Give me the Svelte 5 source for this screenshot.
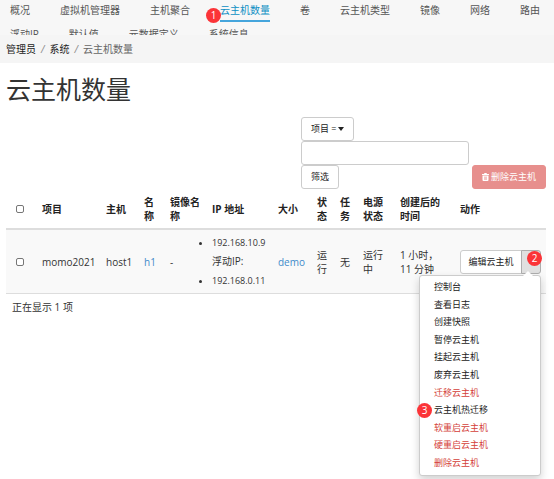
<script>
  const tabs = [
    '概况', '虚拟机管理器', '主机聚合', '云主机数量', '卷', '云主机类型', '镜像',
    '网络', '路由', '浮动IP', '默认值', '元数据定义', '系统信息'
  ];
  const active = '云主机数量';
  const columns = [
    ['项目', 64], ['主机', 38], ['名称', 26], ['镜像名称', 42], ['IP 地址', 66], ['大小', 39],
    ['状态', 23], ['任务', 23], ['电源状态', 37], ['创建后的时间', 60], ['动作', 92]
  ];
  const total = 540;
  const actions = [
    { text: '控制台' }, { text: '查看日志' }, { text: '创建快照' }, { text: '暂停云主机' },
    { text: '挂起云主机' }, { text: '废弃云主机' }, { text: '迁移云主机', danger: true },
    { text: '云主机热迁移', step: 3 }, { text: '软重启云主机', danger: true },
    { text: '硬重启云主机', danger: true }, { text: '删除云主机', danger: true }
  ];
</script>

<div class="page">
  <header>
    <nav>
      {#each tabs as tab}
        <a href="#top" class:active={tab === active}>
          {#if tab === active}<span class="badge tab-badge">1</span>{/if}{tab}
        </a>
      {/each}
    </nav>
    <div class="crumbs">
      <a href="#admin">管理员</a><i>/</i><a href="#system">系统</a><i>/</i><span>云主机数量</span>
    </div>
  </header>

  <main>
    <h1>云主机数量</h1>

    <div class="toolbar">
      <form>
        <button type="button" class="btn">项目 =<svg width="6" height="4" viewBox="0 0 6 4"><path d="M0 0h6L3 4z" fill="currentColor" /></svg></button>
        <input type="text" aria-label="筛选条件" />
        <button type="button" class="btn">筛选</button>
      </form>
      <button type="button" class="btn delete">
        <svg width="7" height="8" viewBox="0 0 14 16"><path fill="currentColor" fill-rule="evenodd" d="M0 2h4l1-2h4l1 2h4v2H0zM1 5h12v9q0 2-2 2H3q-2 0-2-2zM4 7v7h1V7zM6.500 7v7h1V7zM9 7v7h1V7z" /></svg>删除云主机
      </button>
    </div>

    <table>
      <colgroup>
        <col style="width: {(30 / total) * 100}%" />
        {#each columns as [, width]}<col style="width: {(width / total) * 100}%" />{/each}
      </colgroup>
      <thead>
        <tr>
          <th class="check"><input type="checkbox" aria-label="全选" /></th>
          {#each columns as [name]}<th>{name}</th>{/each}
        </tr>
      </thead>
      <tbody>
        <tr>
          <td class="check"><input type="checkbox" aria-label="选择 h1" /></td>
          <td>momo2021</td>
          <td>host1</td>
          <td><a href="#h1">h1</a></td>
          <td>-</td>
          <td class="ips">
            <ul><li>192.168.10.9</li></ul>
            <div>浮动IP:</div>
            <ul><li>192.168.0.11</li></ul>
          </td>
          <td><a href="#demo">demo</a></td>
          <td>运行</td>
          <td>无</td>
          <td>运行中</td>
          <td>1 小时，<br />11 分钟</td>
          <td>
            <div class="group">
              <button type="button" class="btn edit">编辑云主机</button>
              <button type="button" class="btn toggle" aria-label="更多动作"></button>
              <span class="badge toggle-badge">2</span>
              <ul class="menu">
                {#each actions as action}
                  <li>
                    {#if action.step}<span class="badge item-badge">{action.step}</span>{/if}
                    <button type="button" class:danger={action.danger}>{action.text}</button>
                  </li>
                {/each}
              </ul>
            </div>
          </td>
        </tr>
      </tbody>
    </table>
    <p>正在显示 1 项</p>
  </main>
</div>

<style>
  :global(body) {
    margin: 0;
    background: #fff;
  }
  .page {
    min-height: 100vh;
    color: #333;
    font: 10px/14px 'Open Sans', 'Noto Sans CJK SC', sans-serif;
  }
  a {
    color: #428bca;
    text-decoration: none;
  }
  header {
    background: #f5f5f5;
  }
  nav {
    display: flex;
    flex-wrap: wrap;
    align-content: flex-start;
    gap: 2px 30px;
    height: 35px;
    padding: 0 10px;
    overflow: hidden;
    background: #f7f7f7;
  }
  nav a {
    position: relative;
    height: 20px;
    line-height: 20px;
    border-bottom: 2px solid transparent;
    color: #555;
    white-space: nowrap;
  }
  nav a.active {
    color: #0d8fc4;
    border-color: #45a5dc;
  }
  .crumbs {
    display: flex;
    gap: 5px;
    padding: 0 6px;
    line-height: 28px;
    color: #666;
  }
  .crumbs a {
    color: #222;
  }
  .crumbs i {
    color: #888;
  }
  main {
    padding: 0 8px 0 6px;
  }
  h1 {
    margin: 0;
    padding: 9px 0 10px;
    font-size: 25px;
    line-height: 35px;
    font-weight: 400;
  }
  .toolbar {
    display: flex;
    justify-content: flex-end;
    align-items: flex-end;
    gap: 3px;
  }
  form {
    display: flex;
    flex-direction: column;
    align-items: flex-start;
    width: 168px;
  }
  .btn {
    display: flex;
    align-items: center;
    justify-content: center;
    gap: 2px;
    box-sizing: border-box;
    height: 24px;
    padding: 0 9px;
    border: 1px solid #ccc;
    border-radius: 3px;
    background: #fff;
    color: #222;
    font: 9px/14px 'Open Sans', 'Noto Sans CJK SC', sans-serif;
    white-space: nowrap;
  }
  form input {
    box-sizing: border-box;
    width: 100%;
    height: 24px;
    border: 1px solid #ccc;
    border-radius: 3px;
    background: #fff;
  }
  .btn.delete {
    border-color: #e78f8d;
    background: #e78f8d;
    color: #fff;
  }
  table {
    width: 100%;
    table-layout: fixed;
    border-collapse: separate;
    border-spacing: 0;
  }
  th,
  td {
    padding: 3px 5px 3px 6px;
    text-align: left;
    vertical-align: middle;
  }
  th {
    height: 33px;
    border-bottom: 2px solid #ddd;
    color: #222;
    font-weight: 700;
  }
  td {
    background: #f9f9f9;
    border-bottom: 1px solid #ddd;
  }
  .check {
    padding: 3px 10px;
  }
  .check input {
    display: block;
    appearance: none;
    box-sizing: border-box;
    width: 8px;
    height: 8px;
    margin: 0;
    border: 1px solid #767676;
    border-radius: 2px;
    background: #fff;
  }
  .ips {
    line-height: 19px;
  }
  .ips ul {
    margin: 0;
    padding: 0;
    font-size: 9px;
  }
  .group {
    position: relative;
    display: flex;
    width: 81px;
  }
  .edit {
    flex: 1;
    padding: 0;
    border-radius: 3px 0 0 3px;
  }
  .toggle {
    width: 20px;
    margin-left: -1px;
    border-color: #adadad;
    border-radius: 0 3px 3px 0;
    background: #e0e0e0;
  }
  .menu {
    position: absolute;
    z-index: 1;
    top: 25px;
    right: 0;
    display: grid;
    grid-auto-rows: 1fr;
    box-sizing: border-box;
    width: 122px;
    height: 201px;
    margin: 0;
    padding: 3px 0;
    border: 1px solid #ccc;
    border-radius: 3px;
    background: #fff;
    box-shadow: 0 4px 8px rgba(0, 0, 0, 0.18);
    list-style: none;
  }
  .menu::before {
    content: '';
    position: absolute;
    top: -5px;
    right: 7px;
    border: 5px solid transparent;
    border-top: 0;
    border-bottom-color: #fff;
  }
  .menu li {
    position: relative;
    display: flex;
    align-items: center;
  }
  .menu button {
    flex: 1;
    padding: 0 14px;
    border: 0;
    background: none;
    color: #222;
    font: 9px/14px 'Open Sans', 'Noto Sans CJK SC', sans-serif;
    text-align: left;
  }
  .menu button.danger {
    color: #d43f3a;
  }
  .badge {
    position: absolute;
    z-index: 2;
    width: 15px;
    height: 15px;
    border-radius: 50%;
    background: #fb3438;
    color: #fff;
    font-size: 10px;
    line-height: 15px;
    text-align: center;
  }
  .tab-badge {
    top: 8px;
    left: -14px;
  }
  .toggle-badge {
    top: 1px;
    right: -1px;
  }
  .item-badge {
    left: -3px;
  }
  p {
    margin: 0;
    padding: 6px;
  }
</style>
